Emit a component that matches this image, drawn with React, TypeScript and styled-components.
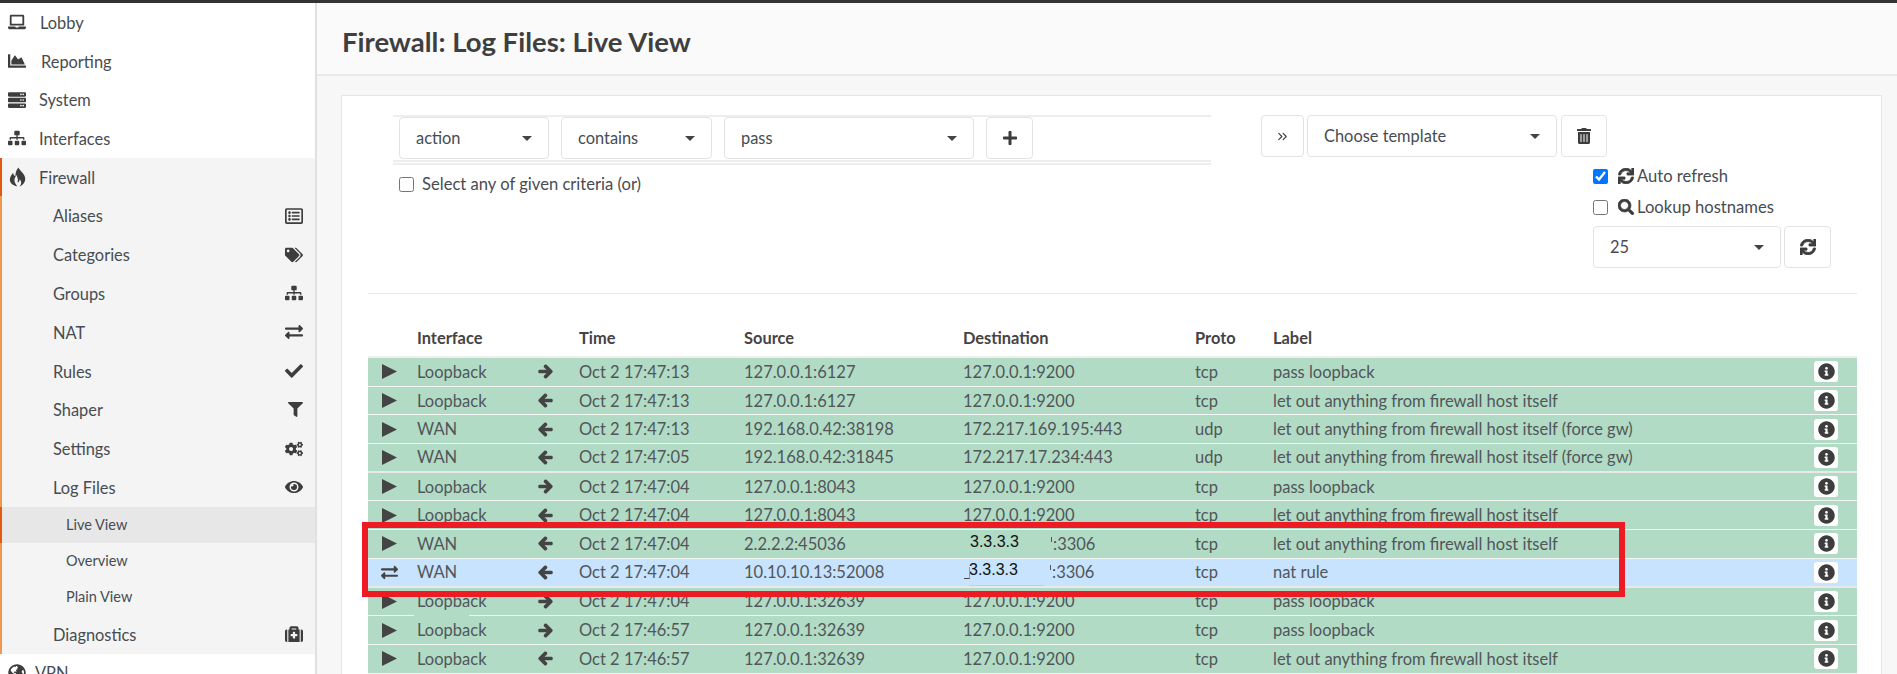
import { FC, ReactNode } from 'react'
import styled, { createGlobalStyle } from 'styled-components'
import {
  FaArrowLeft, FaArrowRight, FaChartArea, FaCheck, FaCogs, FaExchangeAlt, FaEye, FaFilter,
  FaGlobeAmericas, FaInfoCircle, FaLaptop, FaMedkit, FaPlus, FaRegListAlt, FaSearch, FaServer, FaSitemap,
  FaSync, FaTags, FaTrashAlt,
} from 'react-icons/fa'
import { ChevronsRight } from 'lucide-react'

const FONT = `Lato, "Noto Sans", sans-serif`
const TEXT = '#474c52'

const GlobalStyle = createGlobalStyle`
  html, body { margin: 0; height: 100%; overflow: hidden; }
  body { font-family: ${FONT}; font-size: 16.4px; color: ${TEXT}; background: #f7f7f7; }
  * { box-sizing: border-box; }
`

const Page = styled('div')`
  height: 674px;
  border-top: 3px solid #333;
  display: flex;
  overflow: hidden;
`

/* sidebar */
const Sidebar = styled('nav')`
  width: 317px;
  flex: none;
  background: #fff;
  border-right: 2px solid #e0e0e0;
`
const TopItem = styled('div')<{ $active?: boolean }>`
  height: 38.7px;
  display: flex;
  align-items: center;
  padding-left: ${({ $active }) => ($active ? '7px' : '8px')};
  background: ${({ $active }) => ($active ? '#f4f4f4' : '#fff')};
  border-left: ${({ $active }) => ($active ? '2px solid #e2590f' : 'none')};
`
const TopIcon = styled('span')<{ $slot: number }>`
  width: ${({ $slot }) => $slot}px;
  flex: none;
  display: flex;
  font-size: 18px;
  color: #3d3d3d;
`
const SubMenu = styled('div')`
  background: #f4f4f4;
  border-left: 2px solid #f0964f;
`
const SubItem = styled('div')`
  height: 38.8px;
  display: flex;
  align-items: center;
  justify-content: space-between;
  padding: 0 12px 0 51px;
  svg { font-size: 18px; color: #3d3d3d; }
`
const LeafItem = styled('div')<{ $active?: boolean }>`
  height: 36px;
  display: flex;
  align-items: center;
  padding-left: 64px;
  font-size: 14.5px;
  margin-left: ${({ $active }) => ($active ? '-2px' : '0')};
  background: ${({ $active }) => ($active ? '#e7e7e7' : 'transparent')};
  border-left: ${({ $active }) => ($active ? '2px solid #e2590f' : 'none')};
`

/* main column */
const Main = styled('main')`
  flex: 1;
  min-width: 0;
`
const TitleBar = styled('header')`
  height: 73px;
  background: #fafafa;
  border-bottom: 2px solid #ebebeb;
  padding: 6px 0 0 25px;
  display: flex;
  align-items: center;
`
const Title = styled('h1')`
  margin: 0;
  font-size: 27.5px;
  font-weight: 700;
  color: #3f3f3f;
`
const Card = styled('section')`
  margin: 19px 15px 0 24px;
  background: #fff;
  border: 1px solid #e6e6e6;
  padding: 0 24px 0 26px;
`
const FilterSection = styled('div')`
  display: flex;
  padding: 19px 0 25px;
  border-bottom: 1px solid #e8e8e8;
`
const FilterColumn = styled('div')`
  width: 818px;
  margin-left: 25px;
  flex: none;
`
const FilterRow = styled('div')`
  border-top: 2px solid #eee;
  border-bottom: 2px solid #eee;
  padding: 0 6px;
  display: flex;
  gap: 12px;
  height: 47px;
  margin-bottom: 2px;
  position: relative;
  &::after {
    content: '';
    position: absolute;
    left: 0;
    right: 0;
    bottom: -5px;
    border-bottom: 2px solid #eee;
  }
`
const Dropdown = styled('div')<{ $width: number }>`
  width: ${({ $width }) => $width}px;
  height: 42px;
  flex: none;
  border: 1px solid #e3e3e3;
  border-radius: 4px;
  background: #fff;
  display: flex;
  align-items: center;
  justify-content: space-between;
  padding: 0 16px 2px;
`
const Caret = styled('i')`
  border-left: 5px solid transparent;
  border-right: 5px solid transparent;
  border-top: 5px solid #444;
  margin-top: 2px;
`
const IconButton = styled('div')<{ $width: number }>`
  width: ${({ $width }) => $width}px;
  height: 42px;
  flex: none;
  border: 1px solid #e3e3e3;
  border-radius: 4px;
  background: #fff;
  display: flex;
  align-items: center;
  justify-content: center;
  font-size: 16px;
  color: #3d3d3d;
`
const CheckLabel = styled('label')`
  display: flex;
  align-items: center;
  gap: 8px;
  font-size: 16.6px;
  height: 24px;
`
const CheckBox = styled('input').attrs({ type: 'checkbox' })`
  width: 15px;
  height: 15px;
  margin: 0;
  flex: none;
`
const OrLabel = styled(CheckLabel)`
  margin: 10px 0 0 6px;
`
const SideColumn = styled('div')`
  margin-left: 50px;
  flex: none;
`
const TemplateRow = styled('div')`
  display: flex;
  gap: 3px;
  & > :last-child { margin-left: 1px; }
`
const OptionStack = styled('div')`
  margin: 7px 0 0 332px;
  display: flex;
  flex-direction: column;
  gap: 7px;
`
const OptionLabel = styled(CheckLabel)`
  gap: 10px;
  svg { font-size: 16px; color: #3d3d3d; margin-right: -7px; }
`
const PageSizeRow = styled('div')`
  display: flex;
  gap: 3px;
`
const BoldSync = styled(FaSync)`
  stroke: currentColor;
  stroke-width: 28;
`
const BoldSearch = styled(FaSearch)`
  stroke: currentColor;
  stroke-width: 20;
`

/* log table */
const COLUMNS = '49px 113px 49px 165px 219px 232px 78px 1fr 55px'
const HeadRow = styled('div')`
  display: grid;
  grid-template-columns: ${COLUMNS};
  height: 64px;
  align-items: end;
  padding-bottom: 9px;
  border-bottom: 2px solid #eee;
  font-weight: 700;
  font-size: 16.4px;
  color: #444;
`
const TableBody = styled('div')`
  position: relative;
`
const Row = styled('div')<{ $nat?: boolean; $gap?: boolean }>`
  display: grid;
  grid-template-columns: ${COLUMNS};
  height: 28.7px;
  align-items: center;
  background: ${({ $nat }) => ($nat ? '#c7e3fd' : '#b2dbc5')};
  border-bottom: ${({ $gap }) => ($gap ? '2px solid #e9e9e9' : '1px solid #f2f7f4')};
  font-size: 16.5px;
  color: #50565a;
  white-space: nowrap;
  position: relative;
`
const RowIcon = styled('div')<{ $nat?: boolean }>`
  display: flex;
  padding-left: ${({ $nat }) => ($nat ? '13px' : '14px')};
  font-size: 17px;
  color: #444;
`
const DirIcon = styled('div')`
  display: flex;
  padding-left: 8px;
  font-size: 15px;
  color: #444;
  svg { stroke: currentColor; stroke-width: 44; overflow: visible; }
`
const PastedIp = styled('span')<{ $nat?: boolean }>`
  display: inline-block;
  position: relative;
  width: 83px;
  margin-left: ${({ $nat }) => ($nat ? '6px' : '7px')};
  font-family: "Liberation Sans", Arial, sans-serif;
  font-size: 16px;
  color: #111;
  transform: translateY(-3px);
  ${({ $nat }) => $nat && `
    &::before {
      content: '';
      position: absolute;
      left: -5px;
      bottom: 0;
      width: 5px;
      height: 11px;
      border-right: 1px solid #6aa6dc;
      border-bottom: 1px solid #444;
    }
    &::after {
      content: '';
      position: absolute;
      left: 0;
      width: 75px;
      bottom: -7px;
      height: 1px;
      background: #b2dbc5;
    }
  `}
`
const Port = styled('span')`
  position: relative;
  &::before {
    content: '';
    position: absolute;
    left: -2px;
    top: 3px;
    width: 1px;
    height: 5px;
    background: #50565a;
  }
`
const InfoCell = styled('div')`
  padding-left: 12px;
`
const InfoButton = styled('div')`
  width: 24px;
  height: 21px;
  background: #fff;
  border-radius: 3px;
  display: flex;
  align-items: center;
  justify-content: center;
  font-size: 17px;
  color: #3d3d3d;
`
const SeamPatch = styled('i')`
  position: absolute;
  left: 46px;
  width: 55px;
  bottom: -1px;
  height: 1px;
  background: #b2dbc5;
`
const Highlight = styled('div')`
  position: absolute;
  left: -6px;
  top: 164px;
  width: 1263px;
  height: 75px;
  border: 6px solid #ed1c24;
  pointer-events: none;
`

const PlayGlyph: FC = () => (
  <svg width="15" height="15" viewBox="0 0 15 15">
    <path d="M0 0 15 7.5 0 15z" fill="#444" />
  </svg>
)

const FlameGlyph: FC = () => (
  <svg width="17" height="20" viewBox="0 0 16 18">
    <path
      d="M9 0C10 3 14 5 15 9 16 13 14 16 10 18 12 15 12 13 10 11 10 13 9 14 8 14 9 12 8 9 7 7 6 9 4 11 6 15 7 16.500 7.500 17.500 8 18 3 17 0 14 1 10 1.500 8 3 6 4 5 4 7 5 8 6 8 6 5 7 2 9 0z"
      fill="#3d3d3d"
    />
  </svg>
)

type LogRow = {
  nat?: boolean
  iface: string
  out: boolean
  time: string
  source: string
  dest?: string
  pasted?: boolean
  proto: string
  label: string
  gap?: boolean
  seam?: boolean
}

const LOOP_OUT = 'let out anything from firewall host itself'
const FORCE = 'let out anything from firewall host itself (force gw)'
const rows: LogRow[] = [
  { iface: 'Loopback', out: true, time: 'Oct 2 17:47:13', source: '127.0.0.1:6127', dest: '127.0.0.1:9200', proto: 'tcp', label: 'pass loopback' },
  { iface: 'Loopback', out: false, time: 'Oct 2 17:47:13', source: '127.0.0.1:6127', dest: '127.0.0.1:9200', proto: 'tcp', label: LOOP_OUT },
  { iface: 'WAN', out: false, time: 'Oct 2 17:47:13', source: '192.168.0.42:38198', dest: '172.217.169.195:443', proto: 'udp', label: FORCE },
  { iface: 'WAN', out: false, time: 'Oct 2 17:47:05', source: '192.168.0.42:31845', dest: '172.217.17.234:443', proto: 'udp', label: FORCE, gap: true },
  { iface: 'Loopback', out: true, time: 'Oct 2 17:47:04', source: '127.0.0.1:8043', dest: '127.0.0.1:9200', proto: 'tcp', label: 'pass loopback' },
  { iface: 'Loopback', out: false, time: 'Oct 2 17:47:04', source: '127.0.0.1:8043', dest: '127.0.0.1:9200', proto: 'tcp', label: LOOP_OUT },
  { iface: 'WAN', out: false, time: 'Oct 2 17:47:04', source: '2.2.2.2:45036', pasted: true, proto: 'tcp', label: LOOP_OUT },
  { nat: true, iface: 'WAN', out: false, time: 'Oct 2 17:47:04', source: '10.10.10.13:52008', pasted: true, proto: 'tcp', label: 'nat rule', gap: true },
  { iface: 'Loopback', out: true, time: 'Oct 2 17:47:04', source: '127.0.0.1:32639', dest: '127.0.0.1:9200', proto: 'tcp', label: 'pass loopback', seam: true },
  { iface: 'Loopback', out: true, time: 'Oct 2 17:46:57', source: '127.0.0.1:32639', dest: '127.0.0.1:9200', proto: 'tcp', label: 'pass loopback' },
  { iface: 'Loopback', out: false, time: 'Oct 2 17:46:57', source: '127.0.0.1:32639', dest: '127.0.0.1:9200', proto: 'tcp', label: LOOP_OUT },
]

const topBefore: { label: string; icon: ReactNode; slot: number }[] = [
  { label: 'Lobby', icon: <FaLaptop />, slot: 32 },
  { label: 'Reporting', icon: <FaChartArea />, slot: 33 },
  { label: 'System', icon: <FaServer />, slot: 31 },
  { label: 'Interfaces', icon: <FaSitemap />, slot: 31 },
]
const subBefore: [string, ReactNode][] = [
  ['Aliases', <FaRegListAlt />],
  ['Categories', <FaTags />],
  ['Groups', <FaSitemap />],
  ['NAT', <FaExchangeAlt />],
  ['Rules', <FaCheck />],
  ['Shaper', <FaFilter size={15} />],
  ['Settings', <FaCogs />],
  ['Log Files', <FaEye />],
]

const Select: FC<{ width: number; children: ReactNode }> = ({ width, children }) => (
  <Dropdown $width={width}>
    <span>{children}</span>
    <Caret />
  </Dropdown>
)

const App: FC = () => (
  <>
    <GlobalStyle />
    <Page>
      <Sidebar>
        {topBefore.map((item) => (
          <TopItem key={item.label}>
            <TopIcon $slot={item.slot}>{item.icon}</TopIcon>
            {item.label}
          </TopItem>
        ))}
        <TopItem $active>
          <TopIcon $slot={30}><FlameGlyph /></TopIcon>
          Firewall
        </TopItem>
        <SubMenu>
          {subBefore.map(([label, icon]) => (
            <SubItem key={label}>{label}{icon}</SubItem>
          ))}
          <LeafItem $active>Live View</LeafItem>
          <LeafItem>Overview</LeafItem>
          <LeafItem>Plain View</LeafItem>
          <SubItem>Diagnostics<FaMedkit /></SubItem>
        </SubMenu>
        <TopItem>
          <TopIcon $slot={27}><FaGlobeAmericas /></TopIcon>
          VPN
        </TopItem>
      </Sidebar>
      <Main>
        <TitleBar>
          <Title>Firewall: Log Files: Live View</Title>
        </TitleBar>
        <Card>
          <FilterSection>
            <FilterColumn>
              <FilterRow>
                <Select width={150}>action</Select>
                <Select width={151}>contains</Select>
                <Select width={250}>pass</Select>
                <IconButton $width={47}><FaPlus /></IconButton>
              </FilterRow>
              <OrLabel>
                <CheckBox />
                Select any of given criteria (or)
              </OrLabel>
            </FilterColumn>
            <SideColumn>
              <TemplateRow>
                <IconButton $width={43}><ChevronsRight size={15} strokeWidth={1.8} /></IconButton>
                <Select width={250}>Choose template</Select>
                <IconButton $width={46}><FaTrashAlt /></IconButton>
              </TemplateRow>
              <OptionStack>
                <OptionLabel>
                  <CheckBox defaultChecked />
                  <BoldSync />
                  Auto refresh
                </OptionLabel>
                <OptionLabel>
                  <CheckBox />
                  <BoldSearch />
                  Lookup hostnames
                </OptionLabel>
                <PageSizeRow>
                  <Select width={188}>25</Select>
                  <IconButton $width={47}><BoldSync /></IconButton>
                </PageSizeRow>
              </OptionStack>
            </SideColumn>
          </FilterSection>
          <HeadRow>
            <span />
            <span>Interface</span>
            <span />
            <span>Time</span>
            <span>Source</span>
            <span>Destination</span>
            <span>Proto</span>
            <span>Label</span>
            <span />
          </HeadRow>
          <TableBody>
            {rows.map((row, i) => (
              <Row key={i} $nat={row.nat} $gap={row.gap}>
                <RowIcon $nat={row.nat}>{row.nat ? <FaExchangeAlt /> : <PlayGlyph />}</RowIcon>
                <span>{row.iface}</span>
                <DirIcon>{row.out ? <FaArrowRight /> : <FaArrowLeft />}</DirIcon>
                <span>{row.time}</span>
                <span>{row.source}</span>
                <span>
                  {row.pasted ? (
                    <>
                      <PastedIp $nat={row.nat}>3.3.3.3</PastedIp>
                      <Port>:3306</Port>
                    </>
                  ) : row.dest}
                </span>
                <span>{row.proto}</span>
                <span>{row.label}</span>
                <InfoCell><InfoButton><FaInfoCircle /></InfoButton></InfoCell>
                {row.seam && <SeamPatch />}
              </Row>
            ))}
            <Highlight />
          </TableBody>
        </Card>
      </Main>
    </Page>
  </>
)

export default App
